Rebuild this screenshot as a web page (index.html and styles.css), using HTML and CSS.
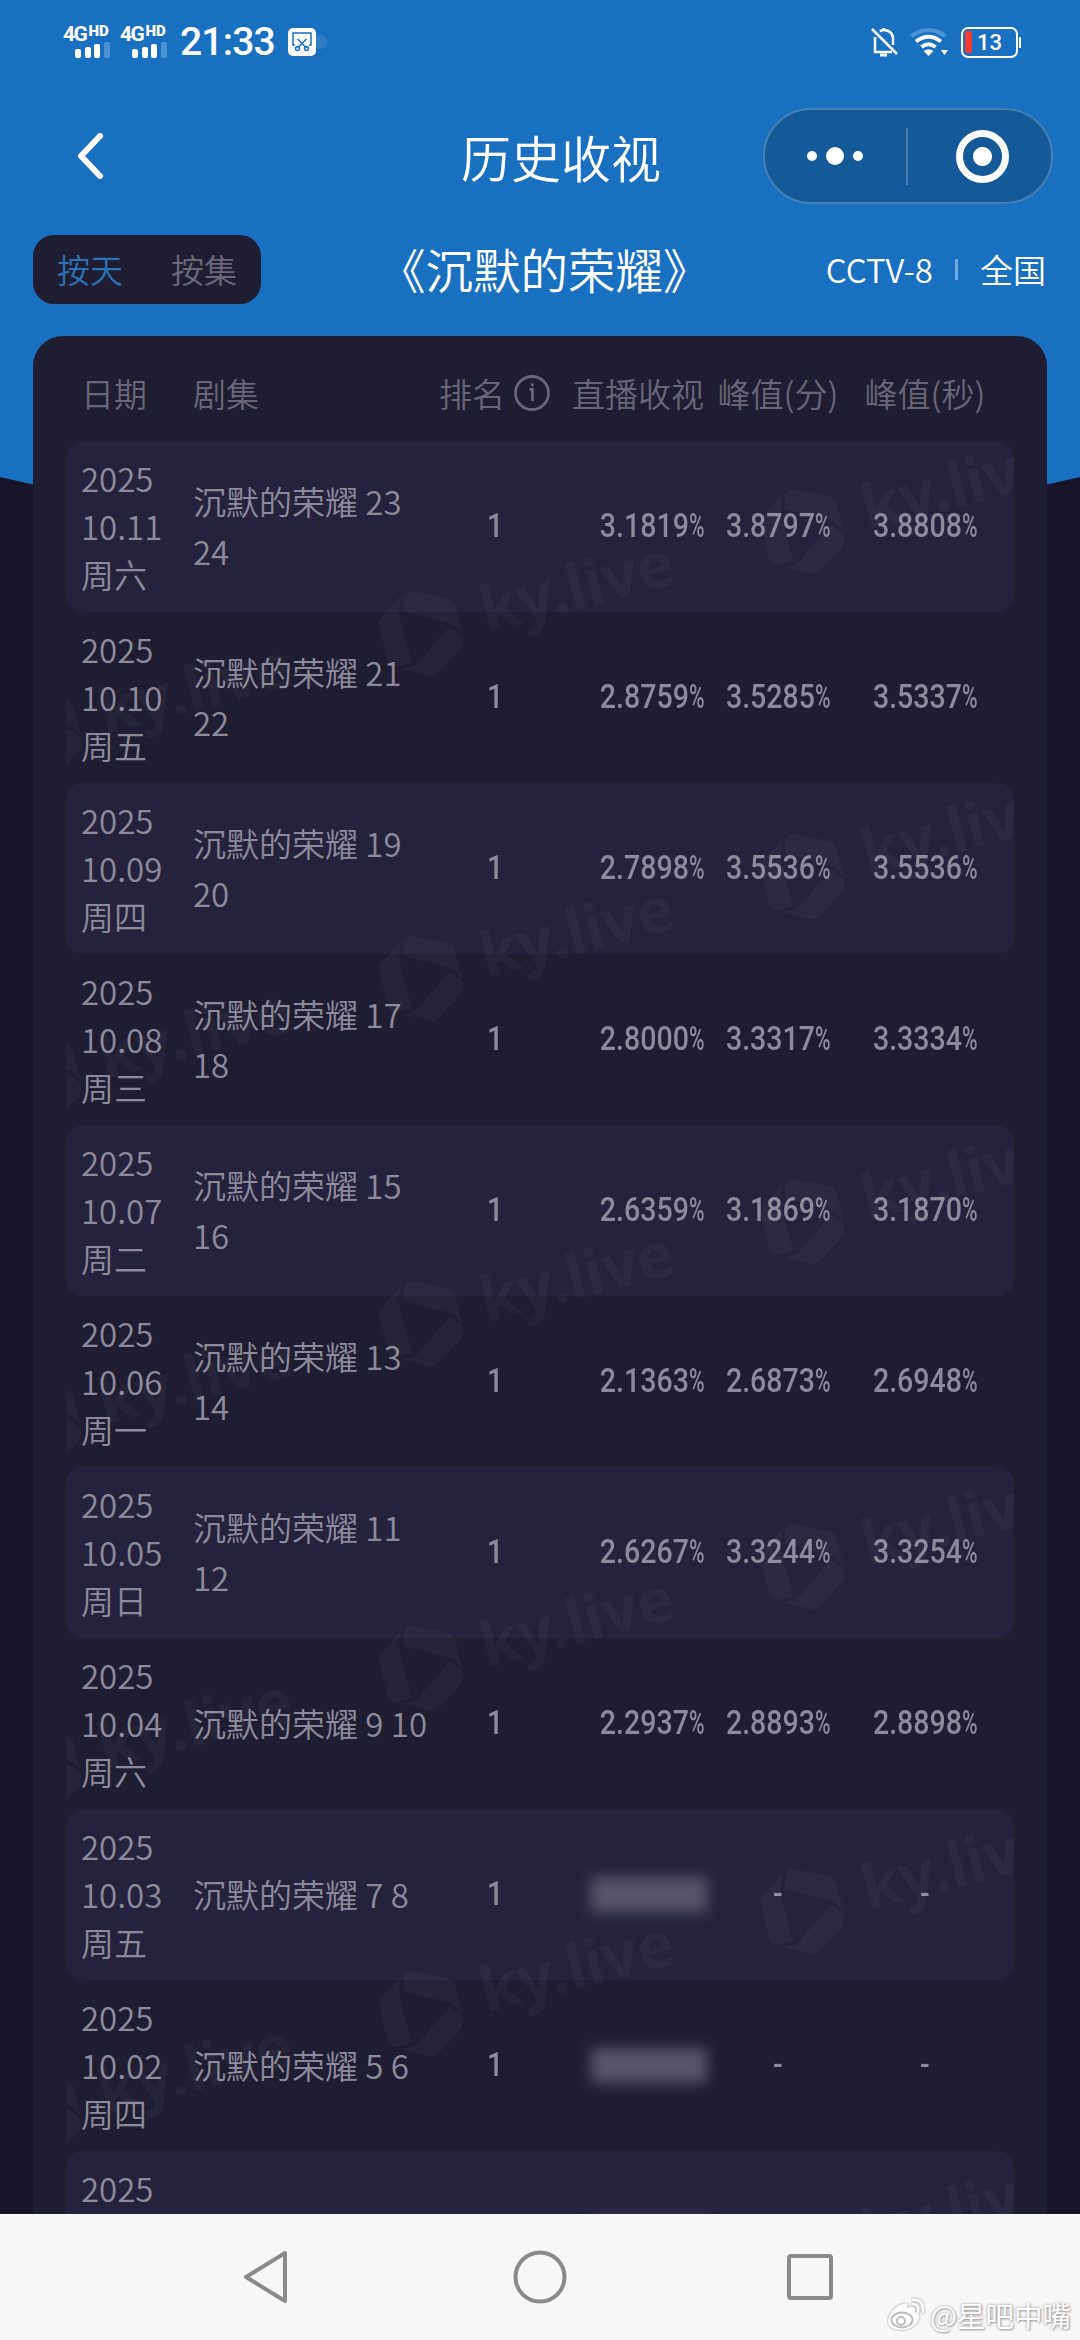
FILE: index.html
```html
<!DOCTYPE html>
<html lang="zh-CN">
<head>
    <meta charset="UTF-8">
    <meta name="viewport" content="width=device-width, initial-scale=1.0">
    <title>历史收视</title>
    <link rel="stylesheet" href="styles.css">
</head>
<body>
    <div class="app">
        <div class="status-bar">
            <div class="sim">
                <span class="net">4G<sup>HD</sup></span>
                <div class="signal"><i></i><i></i><i></i><i></i></div>
            </div>
            <div class="sim">
                <span class="net">4G<sup>HD</sup></span>
                <div class="signal"><i></i><i></i><i></i><i></i></div>
            </div>
            <span class="clock">21:33</span>
            <svg class="clip-icon" width="40" height="28" viewBox="0 0 40 28">
                <circle cx="32" cy="14" r="7" fill="#2f7cc6"/>
                <rect width="28" height="28" rx="5" fill="#fff"/>
                <g fill="none" stroke="#1a70c0" stroke-width="1.5">
                    <path d="M7 17H5V5h18v12h-2M9.500 11l9 9M18.500 11l-9 9"/>
                    <circle cx="9.500" cy="20.500" r="2"/>
                    <circle cx="18.500" cy="20.500" r="2"/>
                </g>
            </svg>
            <div class="status-right">
                <svg width="28" height="30" viewBox="0 0 28 30" fill="none" stroke="#fff" stroke-width="2.500">
                    <path d="M9 4.500C12 1.500 22 3 22 12v6M4 10v15h17M1 2l25 25"/>
                    <path d="M9 28h7" stroke-width="3"/>
                    <path d="M12.500 1v3"/>
                </svg>
                <svg width="40" height="30" viewBox="0 0 40 30" fill="none" stroke="#fff" stroke-width="4">
                    <path d="M1.500 9Q18.500-3 35.500 9" stroke="#4a93d4"/>
                    <path d="M6 14.500Q18.500 5 31 14.500M11.500 20Q18.500 14.500 25.500 20"/>
                    <path d="M13.500 24q5-3.500 10 0l-5 5zM31 23h7l-3.500 5z" fill="#fff" stroke="none"/>
                </svg>
                <div class="battery"><span>13</span></div>
            </div>
        </div>

        <div class="nav-bar">
            <svg class="back" width="32" height="52" viewBox="0 0 32 52">
                <path d="M26 6L7 26l19 20" fill="none" stroke="#fff" stroke-width="6" stroke-linecap="round" stroke-linejoin="round"/>
            </svg>
            <h1>历史收视</h1>
            <div class="capsule">
                <div class="dots"><i></i><i class="big"></i><i></i></div>
                <div class="close"><i></i></div>
            </div>
        </div>

        <div class="filter-bar">
            <div class="tabs">
                <span class="active">按天</span>
                <span>按集</span>
            </div>
            <h2>《沉默的荣耀》</h2>
            <div class="channel"><span>CCTV-8</span><i></i><span>全国</span></div>
        </div>

        <div class="card">
            <div class="row head">
                <div>日期</div>
                <div>剧集</div>
                <div class="rank-head">排名
                    <svg width="38" height="38" viewBox="0 0 38 38" fill="none" stroke="currentColor">
                        <circle cx="19" cy="19" r="16.500" stroke-width="2.800"/>
                        <path d="M16.500 15.500h3V27M19.300 9.500v3" stroke-width="2.800"/>
                    </svg>
                </div>
                <div class="live">直播收视</div>
                <div class="peak">峰值(分)</div>
                <div class="peak">峰值(秒)</div>
            </div>

            <div class="list">
                <div class="row">
                    <div class="date">2025<br>10.11<br>周六</div>
                    <div class="episode">沉默的荣耀 23<br>24</div>
                    <div class="rank">1</div>
                    <div class="live"><b>3.1819<i>%</i></b></div>
                    <div class="peak"><b>3.8797<i>%</i></b></div>
                    <div class="peak"><b>3.8808<i>%</i></b></div>
                </div>
                <div class="row">
                    <div class="date">2025<br>10.10<br>周五</div>
                    <div class="episode">沉默的荣耀 21<br>22</div>
                    <div class="rank">1</div>
                    <div class="live"><b>2.8759<i>%</i></b></div>
                    <div class="peak"><b>3.5285<i>%</i></b></div>
                    <div class="peak"><b>3.5337<i>%</i></b></div>
                </div>
                <div class="row">
                    <div class="date">2025<br>10.09<br>周四</div>
                    <div class="episode">沉默的荣耀 19<br>20</div>
                    <div class="rank">1</div>
                    <div class="live"><b>2.7898<i>%</i></b></div>
                    <div class="peak"><b>3.5536<i>%</i></b></div>
                    <div class="peak"><b>3.5536<i>%</i></b></div>
                </div>
                <div class="row">
                    <div class="date">2025<br>10.08<br>周三</div>
                    <div class="episode">沉默的荣耀 17<br>18</div>
                    <div class="rank">1</div>
                    <div class="live"><b>2.8000<i>%</i></b></div>
                    <div class="peak"><b>3.3317<i>%</i></b></div>
                    <div class="peak"><b>3.3334<i>%</i></b></div>
                </div>
                <div class="row">
                    <div class="date">2025<br>10.07<br>周二</div>
                    <div class="episode">沉默的荣耀 15<br>16</div>
                    <div class="rank">1</div>
                    <div class="live"><b>2.6359<i>%</i></b></div>
                    <div class="peak"><b>3.1869<i>%</i></b></div>
                    <div class="peak"><b>3.1870<i>%</i></b></div>
                </div>
                <div class="row">
                    <div class="date">2025<br>10.06<br>周一</div>
                    <div class="episode">沉默的荣耀 13<br>14</div>
                    <div class="rank">1</div>
                    <div class="live"><b>2.1363<i>%</i></b></div>
                    <div class="peak"><b>2.6873<i>%</i></b></div>
                    <div class="peak"><b>2.6948<i>%</i></b></div>
                </div>
                <div class="row">
                    <div class="date">2025<br>10.05<br>周日</div>
                    <div class="episode">沉默的荣耀 11<br>12</div>
                    <div class="rank">1</div>
                    <div class="live"><b>2.6267<i>%</i></b></div>
                    <div class="peak"><b>3.3244<i>%</i></b></div>
                    <div class="peak"><b>3.3254<i>%</i></b></div>
                </div>
                <div class="row">
                    <div class="date">2025<br>10.04<br>周六</div>
                    <div class="episode">沉默的荣耀 9 10</div>
                    <div class="rank">1</div>
                    <div class="live"><b>2.2937<i>%</i></b></div>
                    <div class="peak"><b>2.8893<i>%</i></b></div>
                    <div class="peak"><b>2.8898<i>%</i></b></div>
                </div>
                <div class="row">
                    <div class="date">2025<br>10.03<br>周五</div>
                    <div class="episode">沉默的荣耀 7 8</div>
                    <div class="rank">1</div>
                    <div class="live"><span class="locked"></span></div>
                    <div class="peak"><b>-</b></div>
                    <div class="peak"><b>-</b></div>
                </div>
                <div class="row">
                    <div class="date">2025<br>10.02<br>周四</div>
                    <div class="episode">沉默的荣耀 5 6</div>
                    <div class="rank">1</div>
                    <div class="live"><span class="locked"></span></div>
                    <div class="peak"><b>-</b></div>
                    <div class="peak"><b>-</b></div>
                </div>
                <div class="row">
                    <div class="date">2025<br>&nbsp;<br>&nbsp;</div>
                    <div class="episode"></div>
                    <div class="rank"></div>
                    <div class="live"><span class="locked"></span></div>
                    <div class="peak"></div>
                    <div class="peak"></div>
                </div>

                <!-- tiled brand mark over the list -->
                <svg class="watermark" width="948" height="1773" viewBox="66 441 948 1773">
                    <defs>
                        <g id="mark">
                            <path d="M-17-37Q-14-43-9-43L27-36Q33-34 35-27L42 1Q36-10 27-12L-17-23z"/>
                            <path d="M-19-39L-40-15Q-43-12-41-7L-33 27Q-31 34-24 33L-9 29-21-17q-1-10 2-22z"/>
                            <path d="M29-7Q42 0 42.500 6L41 14 16 41Q13 43 8 42L-18 35Q-10 34-4 31z"/>
                            <text x="64" y="15" transform="rotate(-14.500)">ky.live</text>
                        </g>
                        <g id="band">
                            <use href="#mark" x="39" y="391"/>
                            <use href="#mark" x="420.500" y="289"/>
                            <use href="#mark" x="802" y="187"/>
                        </g>
                    </defs>
                    <use href="#band"/>
                    <use href="#band" y="345"/>
                    <use href="#band" y="690"/>
                    <use href="#band" y="1035"/>
                    <use href="#band" y="1380"/>
                    <use href="#band" y="1725"/>
                    <use href="#band" y="2070"/>
                </svg>
            </div>
        </div>
    </div>

    <div class="system-nav">
        <svg width="52" height="60" viewBox="0 0 52 60"><path d="M43 6v48L4 30z"/></svg>
        <svg width="60" height="60" viewBox="0 0 60 60"><circle cx="30" cy="30" r="24.500"/></svg>
        <svg width="52" height="60" viewBox="0 0 52 60"><rect x="5" y="9" width="42" height="42" rx="2"/></svg>
    </div>

    <div class="weibo">
        <svg width="40" height="36" viewBox="0 0 40 36">
            <path d="M17 7c3-2 6 0 4 4 5-2 9-1 8 4 4 1 5 4 4 7-2 6-9 11-17 11S2 30 2 24C2 17 11 8 17 7z" fill="#fff"/>
            <ellipse cx="16" cy="23" rx="10.500" ry="7.500" fill="#fff" stroke="#bbb" stroke-width="2"/>
            <circle cx="15" cy="24" r="4" fill="#fff" stroke="#bbb" stroke-width="2"/>
            <path d="M27 7q6 0 5 8M27 2.500q11 0 10 13" fill="none" stroke="#fff" stroke-width="2.500" stroke-linecap="round"/>
        </svg>
        <span>@星吧中嘴</span>
    </div>
</body>
</html>
```
FILE: styles.css
```css
* {
    box-sizing: border-box;
}

body {
    margin: 0;
    height: 2340px;
    overflow: hidden;
    position: relative;
    background: #18152a;
    color: #fff;
    font-family: "Noto Sans CJK SC", sans-serif;
    font-weight: 350;
}

i {
    font-style: normal;
}

.app {
    position: relative;
    height: 2214px;
    overflow: hidden;
}

/* blue header, its bottom edge dips behind the card */
.app::before {
    content: "";
    position: absolute;
    z-index: -1;
    inset: 0 0 auto;
    height: 520px;
    background: #1a70c0;
    clip-path: polygon(0 0, 100% 0, 100% 477px, 1047px 484.5px, 880px 515px, 200px 515px, 33px 484.5px, 0 477px);
}

/* status bar */
.status-bar {
    display: flex;
    align-items: center;
    height: 84px;
    padding: 0 59px 0 63px;
    font-family: Roboto, sans-serif;
    font-weight: 500;
}

.sim {
    width: 47px;
    height: 32px;
    margin-right: 10px;
}

.net {
    display: flex;
    height: 15px;
    font-size: 21px;
    font-weight: 700;
    line-height: 16px;
    letter-spacing: -1.5px;
}

.net sup {
    margin-left: 2px;
    font-size: 15px;
    font-weight: 900;
    line-height: 10px;
    letter-spacing: 0;
}

.signal {
    display: flex;
    align-items: flex-end;
    gap: 3.5px;
    height: 17px;
    padding-left: 12px;
}

.signal i {
    width: 6px;
    height: 9px;
    border-radius: 2px;
    background: #fff;
}

.signal i:nth-child(2) {
    height: 11px;
}

.signal i:nth-child(3) {
    height: 14px;
}

.signal i:nth-child(4) {
    height: 16px;
    background: #4a93d4;
}

.clock {
    width: 103px;
    margin-left: 3px;
    font-size: 39px;
    line-height: 40px;
    letter-spacing: -0.8px;
}

.clip-icon {
    margin-left: 5px;
}

.status-right {
    display: flex;
    align-items: center;
    margin-left: auto;
    gap: 11px;
}

.battery {
    position: relative;
    width: 57px;
    height: 31px;
    margin-right: 3px;
    border: 2.5px solid #fff;
    border-radius: 7px;
    font-size: 22px;
    line-height: 27px;
    text-align: center;
}

.battery::before {
    content: "";
    position: absolute;
    left: 2px;
    top: 2px;
    width: 7px;
    height: 22px;
    border-radius: 2px;
    background: #f43b2f;
}

.battery::after {
    content: "";
    position: absolute;
    right: -5px;
    top: 8px;
    width: 2px;
    height: 11px;
    background: #fff;
}

/* title and mini program capsule */
.nav-bar {
    display: grid;
    grid-template-columns: 377px 220px 1fr;
    align-items: center;
    height: 144px;
    padding: 0 27px 0 74px;
}

.nav-bar h1 {
    margin: 0;
    font-size: 50px;
    font-weight: 350;
    line-height: 60px;
    text-align: center;
}

.capsule {
    display: flex;
    align-items: center;
    justify-self: end;
    width: 290px;
    height: 96px;
    border: 2px solid #4680b3;
    border-radius: 48px;
    background: #145a99;
}

.dots,
.close {
    display: flex;
    align-items: center;
    justify-content: center;
    gap: 9px;
    width: 145px;
    height: 57px;
}

.dots {
    border-right: 2px solid #477eb1;
}

.dots i {
    width: 10px;
    height: 10px;
    border-radius: 50%;
    background: #fff;
}

.dots .big {
    width: 18px;
    height: 18px;
}

.close {
    padding-left: 6px;
}

.close i {
    width: 53px;
    height: 53px;
    border: 7px solid #fff;
    border-radius: 50%;
    background: radial-gradient(#fff 9px, transparent 10px);
}

/* filters */
.filter-bar {
    display: grid;
    grid-template-columns: 340px 1fr 320px;
    align-items: center;
    height: 82px;
    padding: 0 34px 0 33px;
    font-size: 33px;
}

.tabs {
    display: flex;
    width: 228px;
    height: 69px;
    border-radius: 21px;
    background: #1f1d31;
    line-height: 68px;
    text-align: center;
    color: #6a6879;
}

.tabs span {
    flex: 1;
}

.tabs .active {
    color: #2a72b8;
}

.filter-bar h2 {
    margin: 0 0 0 5px;
    font-size: 47.5px;
    font-weight: 350;
    white-space: nowrap;
    line-height: 60px;
}

.channel {
    display: flex;
    align-items: center;
    justify-content: flex-end;
}

.channel i {
    width: 3px;
    height: 21px;
    margin: 0 22px;
    background: #6fa9dd;
}

/* rating table */
.card {
    width: 1014px;
    margin: 26px auto 0;
    padding: 0 33px;
    border-radius: 30px 30px 0 0;
    background: #1f1d31;
    font-size: 33px;
    color: #8d8b9b;
}

.row {
    display: grid;
    grid-template-columns: 112px 240px 124px 147px 148px 146px;
    align-items: center;
    height: 171px;
    padding: 0 16px 0 15px;
    border-radius: 16px;
}

.head {
    height: 105px;
    white-space: nowrap;
    line-height: 48px;
    color: #686677;
}

.head > div {
    padding-top: 9px;
}

.head .rank-head {
    display: flex;
    align-items: center;
    gap: 8px;
    padding-left: 6px;
}

.list {
    position: relative;
}

.list .row:nth-child(odd) {
    background: #25223d;
}

.date {
    padding-bottom: 2px;
    line-height: 48px;
}

.episode {
    padding-bottom: 2px;
    line-height: 50px;
    white-space: nowrap;
}

.rank,
.peak {
    text-align: center;
}

.list .rank,
.row b {
    font-family: Roboto, sans-serif;
    font-size: 34px;
    font-weight: 500;
}

.list .rank {
    padding-bottom: 4px;
    transform: scaleX(0.84);
}

.live {
    text-align: right;
}

.list .live,
.list .peak {
    padding-bottom: 7px;
}

/* condensed figures */
.row b {
    display: inline-block;
    transform: scaleX(0.84);
}

.live b {
    transform-origin: right;
}

.row b i {
    display: inline-block;
    margin-right: -7px;
    transform: scaleX(0.74);
    transform-origin: left;
}

.locked {
    display: inline-block;
    width: 116px;
    height: 35px;
    margin: -4px -3px 0 0;
    background: #585569;
    filter: blur(7px);
    vertical-align: middle;
}

.watermark {
    position: absolute;
    left: 0;
    top: 0;
    fill: #fff;
    fill-opacity: 0.035;
    font: 700 62px "Noto Sans", sans-serif;
}

/* android buttons */
.system-nav {
    display: flex;
    align-items: center;
    justify-content: center;
    gap: 214px;
    height: 126px;
    background: #f7f7f7;
}

.system-nav svg {
    fill: none;
    stroke: #8a8a8a;
    stroke-width: 4;
    stroke-linejoin: round;
}

.system-nav svg:first-child {
    margin: 0 2px 0 -2px;
}

.weibo {
    position: absolute;
    right: 9px;
    bottom: 4px;
    display: flex;
    align-items: center;
    gap: 4px;
    font-size: 28.5px;
    font-weight: 400;
    line-height: 42px;
    text-shadow: 0 0 3px #999, 1px 1px 2px #aaa;
}

.weibo svg {
    filter: drop-shadow(0 0 1px #888);
}
```
